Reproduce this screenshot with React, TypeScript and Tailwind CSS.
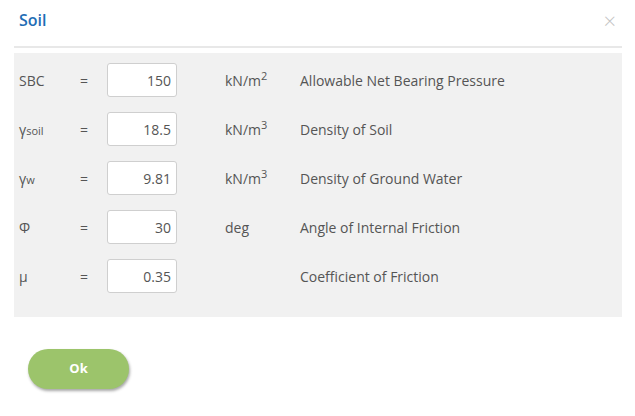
import React from "react";

type Row = {
  label: React.ReactNode;
  value: string;
  unit: React.ReactNode;
  desc: string;
};

const Sup = ({ n }: { n: string }) => (
  <sup className="text-[11px] relative -top-[6px]">{n}</sup>
);

const rows: Row[] = [
  {
    label: "SBC",
    value: "150",
    unit: (
      <>
        kN/m<Sup n="2" />
      </>
    ),
    desc: "Allowable Net Bearing Pressure",
  },
  {
    label: (
      <>
        γ<span className="text-[11px]">soil</span>
      </>
    ),
    value: "18.5",
    unit: (
      <>
        kN/m<Sup n="3" />
      </>
    ),
    desc: "Density of Soil",
  },
  {
    label: (
      <>
        γ<span className="text-[11px]">w</span>
      </>
    ),
    value: "9.81",
    unit: (
      <>
        kN/m<Sup n="3" />
      </>
    ),
    desc: "Density of Ground Water",
  },
  { label: "Φ", value: "30", unit: "deg", desc: "Angle of Internal Friction" },
  { label: "μ", value: "0.35", unit: "", desc: "Coefficient of Friction" },
];

export default function App() {
  return (
    <div className="w-[635px] h-[416px] bg-white font-['Open_Sans',sans-serif] text-[14px] text-[#555]">
      {/* Header */}
      <div className="flex items-center justify-between h-[46px] pl-[19px] pr-[19px] pb-[6px]">
        <h3 className="text-[16px] font-semibold text-[#1f6db5]">Soil</h3>
        <span className="text-[22px] font-light leading-none text-[#c4c4c4]">×</span>
      </div>
      <div className="ml-[14px] mr-[13px] border-t-2 border-[#e8e8e8]" />

      {/* Fields */}
      <div className="ml-[14px] mr-[13px] mt-[5px] bg-[#f1f1f1] pt-[10px] pb-[24px] pl-[5px] flex flex-col gap-[15px]">
        {rows.map((r, i) => (
          <div key={i} className="flex items-center h-[34px]">
            <div className="w-[61px]">{r.label}</div>
            <div className="w-[27px]">=</div>
            <input
              readOnly
              value={r.value}
              className="w-[70px] h-[34px] bg-white border border-[#cfcfcf] rounded-[3px] text-right pr-[5px] text-[14px] text-[#555] outline-none"
            />
            <div className="w-[48px]" />
            <div className="w-[75px]">{r.unit}</div>
            <div>{r.desc}</div>
          </div>
        ))}
      </div>

      {/* Footer */}
      <div className="mt-[32px] ml-[28px]">
        <button className="w-[101px] h-[40px] rounded-full bg-[#9cc46b] text-white text-[13px] font-bold shadow-[1px_2px_3px_rgba(0,0,0,0.35)]">
          Ok
        </button>
      </div>
    </div>
  );
}
